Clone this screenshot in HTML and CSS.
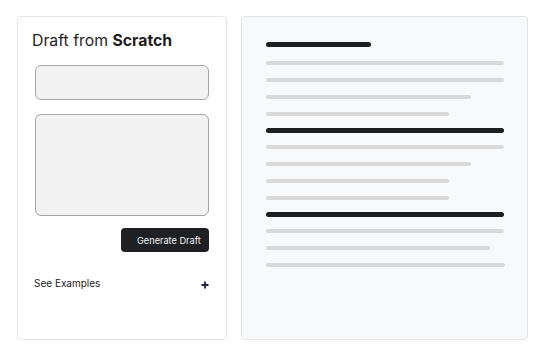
FILE: index.html
```html
<!DOCTYPE html>
<html lang="en">
<head>
    <meta charset="UTF-8">
    <meta name="viewport" content="width=device-width, initial-scale=1.0">
    <title>Draft from Scratch</title>
    <link rel="stylesheet" href="styles.css">
</head>
<body>
    <div class="layout">
        <div class="panel">
            <h2 class="panel-title">Draft from <strong>Scratch</strong></h2>
            <div class="draft-form">
                <input type="text" class="field">
                <textarea class="field field-area"></textarea>
                <div class="actions">
                    <button class="generate-button">Generate Draft</button>
                </div>
            </div>
            <div class="examples">
                <span>See Examples</span>
                <svg class="plus" width="8" height="8" viewBox="0 0 8 8">
                    <path d="M4 0.5V7.5M0.5 4H7.5" stroke="#1b2540" stroke-width="1.8"/>
                </svg>
            </div>
        </div>
        <div class="preview">
            <div class="sheet-line dark heading" style="width: 105px"></div>
            <div class="sheet-line" style="width: 100%"></div>
            <div class="sheet-line" style="width: 100%"></div>
            <div class="sheet-line" style="width: 86%"></div>
            <div class="sheet-line" style="width: 77%"></div>
            <div class="sheet-line dark" style="width: 100%"></div>
            <div class="sheet-line" style="width: 100%"></div>
            <div class="sheet-line" style="width: 86%"></div>
            <div class="sheet-line" style="width: 77%"></div>
            <div class="sheet-line" style="width: 77%"></div>
            <div class="sheet-line dark" style="width: 100%"></div>
            <div class="sheet-line" style="width: 100%"></div>
            <div class="sheet-line" style="width: 94%"></div>
            <div class="sheet-line" style="width: 100.5%"></div>
        </div>
    </div>
</body>
</html>
```

FILE: styles.css
```css
body {
    font-family: 'Inter', 'Noto Sans', sans-serif;
    background-color: #fff;
    color: #1a1a1a;
    margin: 0;
    padding: 0;
}
.layout {
    display: flex;
    gap: 14px;
    padding: 16px 0 0 17px;
}
.panel {
    width: 210px;
    height: 324px;
    box-sizing: border-box;
    border: 1px solid #e4e4e4;
    border-radius: 4px;
    background-color: #fff;
    padding: 14px 17px 0 14px;
}
.panel-title {
    margin: 0;
    font-size: 15.8px;
    line-height: 20px;
    font-weight: 400;
    color: #1f1f1f;
}
.panel-title strong {
    font-weight: 700;
}
.draft-form {
    display: flex;
    flex-direction: column;
    margin: 14px 0 0 3px;
}
.field {
    box-sizing: border-box;
    width: 100%;
    height: 35px;
    margin: 0;
    background-color: #f2f2f2;
    border: 1px solid #a6a6a6;
    border-radius: 6px;
    font-family: inherit;
}
.field-area {
    height: 102px;
    margin-top: 14px;
    resize: none;
}
.actions {
    display: flex;
    justify-content: flex-end;
    margin-top: 12px;
}
.generate-button {
    height: 24px;
    width: 88px;
    padding: 0 8px 0 16px;
    background-color: #1f2023;
    color: #f5f5f5;
    border: none;
    border-radius: 4px;
    font-family: inherit;
    font-size: 9.2px;
    white-space: nowrap;
    text-align: left;
    cursor: pointer;
}
.examples {
    display: flex;
    justify-content: space-between;
    align-items: center;
    margin: 22px 0 0 2px;
    height: 18px;
    font-size: 10px;
    color: #1a1a1a;
}
.plus {
    margin: 4px 0.5px 0 0;
}
.preview {
    width: 287px;
    height: 324px;
    box-sizing: border-box;
    border: 1px solid #e4e4e4;
    border-radius: 4px;
    background-color: #f8f9fb;
    padding: 19px 23px 0 24px;
    display: flex;
    flex-direction: column;
}
.sheet-line {
    height: 4px;
    margin: 6.5px 0;
    border-radius: 3px;
    background-color: #d9d9d9;
}
.sheet-line.dark {
    height: 5px;
    margin: 5.5px 0;
    background-color: #1d1e20;
}
.sheet-line.heading {
    margin-bottom: 7.5px;
}
```
